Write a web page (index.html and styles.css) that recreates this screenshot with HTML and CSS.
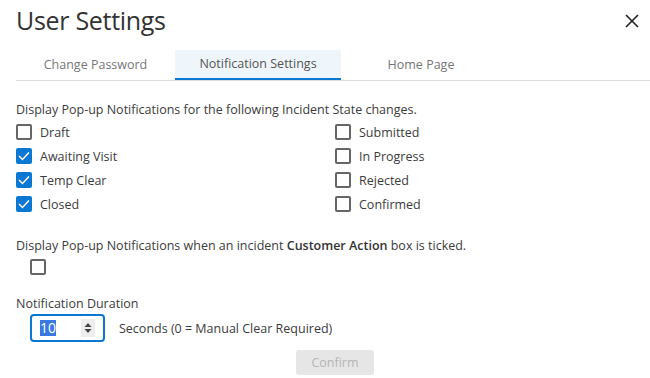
FILE: index.html
```html
<!DOCTYPE html>
<html>
<head>
<meta charset="utf-8">
<link rel="stylesheet" href="styles.css">
</head>
<body>
<div class="dialog">
  <header class="head">
    <h1 class="title">User Settings</h1>
    <button class="close" aria-label="Close">
      <svg width="14" height="14" viewBox="0 0 14 14"><path d="M1 1L13 13M13 1L1 13" stroke="#222" stroke-width="1.6" fill="none"/></svg>
    </button>
  </header>
  <nav class="tabs">
    <div class="tab">Change Password</div>
    <div class="tab active">Notification Settings</div>
    <div class="tab">Home Page</div>
  </nav>
  <section class="content">
    <p class="lead">Display Pop-up Notifications for the following Incident State changes.</p>
    <div class="grid">
      <label class="cb"><span class="box"></span>Draft</label>
      <label class="cb"><span class="box"></span>Submitted</label>
      <label class="cb"><span class="box on"><svg width="12" height="10" viewBox="0 0 12 10"><path d="M1 5L4.5 8.5L11 1.5" stroke="#fff" stroke-width="1.5" fill="none"/></svg></span>Awaiting Visit</label>
      <label class="cb"><span class="box"></span>In Progress</label>
      <label class="cb"><span class="box on"><svg width="12" height="10" viewBox="0 0 12 10"><path d="M1 5L4.5 8.5L11 1.5" stroke="#fff" stroke-width="1.5" fill="none"/></svg></span>Temp Clear</label>
      <label class="cb"><span class="box"></span>Rejected</label>
      <label class="cb"><span class="box on"><svg width="12" height="10" viewBox="0 0 12 10"><path d="M1 5L4.5 8.5L11 1.5" stroke="#fff" stroke-width="1.5" fill="none"/></svg></span>Closed</label>
      <label class="cb"><span class="box"></span>Confirmed</label>
    </div>
    <p class="lead2">Display Pop-up Notifications when an incident <b>Customer Action</b> box is ticked.</p>
    <div class="single"><span class="box"></span></div>
    <p class="label">Notification Duration</p>
    <div class="duration">
      <div class="num"><span class="sel">10</span><span class="spin"><svg width="8" height="12" viewBox="0 0 8 12"><path d="M4 1L7.5 5H0.5Z M4 11L7.5 7H0.5Z" fill="#444"/></svg></span></div>
      <span class="hint">Seconds (0 = Manual Clear Required)</span>
    </div>
    <div class="actions"><button class="confirm">Confirm</button></div>
  </section>
</div>
</body>
</html>
```
FILE: styles.css
```css
* { box-sizing: border-box; }
html, body { margin: 0; padding: 0; background: #fff; }
body { font-family: "Open Sans", "Noto Sans", sans-serif; color: #3c3c3c; font-size: 12.5px; }
.dialog { width: 650px; height: 378px; overflow: hidden; }
.head { display: flex; justify-content: space-between; align-items: center; padding: 0 8px 0 16px; height: 40px; }
.title { margin: 0; font-weight: 400; font-size: 25px; color: #333; letter-spacing: -0.3px; }
.close { border: 0; background: none; padding: 0; width: 20px; height: 20px; display: flex; align-items: center; justify-content: center; margin-top: 2px; }
.tabs { display: flex; margin: 10px 0 0 16px; border-bottom: 1px solid #ddd; height: 31px; }
.tab { height: 30px; display: flex; align-items: center; justify-content: center; font-size: 12.5px; color: #777; padding-bottom: 1px; }
.tab:nth-child(1) { width: 159px; }
.tab:nth-child(2) { width: 166px; }
.tab:nth-child(3) { width: 160px; }
.tab.active { background: #eff6fb; color: #555; border-bottom: 2px solid #0a78d2; }
.content { padding: 0 16px; }
.lead { margin: 20px 0 4px; }
.grid { display: grid; grid-template-columns: 319px 1fr; row-gap: 6px; margin-top: 0; }
.cb { display: flex; align-items: center; height: 18px; gap: 8px; position: relative; top: 1px; }
.box { width: 16px; height: 16px; border: 2px solid #666; border-radius: 2px; display: inline-flex; align-items: center; justify-content: center; background: #fff; }
.box.on { background: #0a78d2; border-color: #0a78d2; }
.lead2 { margin: 25px 0 5px; }
.lead2 b { font-weight: 600; color: #333; }
.single { padding-left: 14px; height: 16px; }
.label { margin: 20px 0 2px; }
.duration { display: flex; align-items: center; gap: 14px; padding-left: 14px; }
.num { width: 75px; height: 28px; border: 2px solid #0a78d2; border-radius: 4px; display: flex; align-items: center; justify-content: space-between; padding: 0 8px 0 8px; }
.sel { background: #3a7ae0; color: #fff; font-size: 14px; line-height: 16px; }
.spin { width: 14px; height: 18px; background: #eee; display: flex; align-items: center; justify-content: center; }
.actions { display: flex; justify-content: center; padding-left: 20px; margin-top: 8px; }
.confirm { width: 78px; height: 25px; border: 0; border-radius: 3px; background: #e6e6e6; color: #b4b4b4; font-family: inherit; font-size: 12.5px; }
```
